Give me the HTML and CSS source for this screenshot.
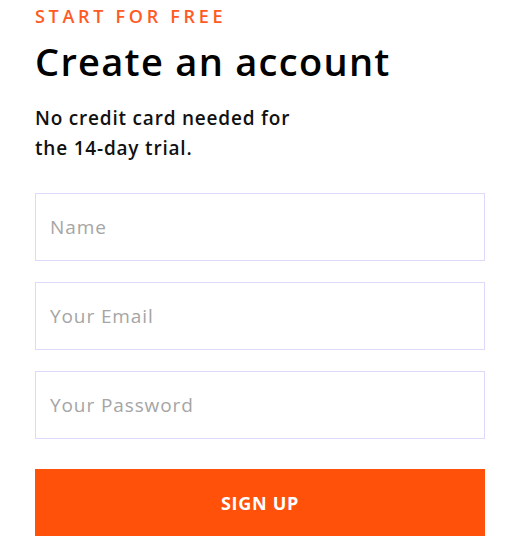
FILE: index.html
```html
<!DOCTYPE html>
<html>
<head>
<meta charset="utf-8">
<link rel="stylesheet" href="styles.css">
</head>
<body>
<div class="signup">
  <p class="eyebrow">START FOR FREE</p>
  <h1 class="title">Create an account</h1>
  <p class="lead">No credit card needed for<br>the 14-day trial.</p>
  <form class="form">
    <input class="field" type="text" placeholder="Name">
    <input class="field" type="email" placeholder="Your Email">
    <input class="field" type="password" placeholder="Your Password">
    <button class="submit" type="button">SIGN UP</button>
  </form>
</div>
</body>
</html>
```
FILE: styles.css
```css
html, body {
  margin: 0;
  padding: 0;
  background: #ffffff;
}
body {
  font-family: "Open Sans", "DejaVu Sans", sans-serif;
  color: #0b0b0b;
}
.signup {
  width: 450px;
  padding: 4px 0 0 35px;
}
.eyebrow {
  margin: 0;
  font-size: 18px;
  line-height: 24px;
  font-weight: 600;
  letter-spacing: 3.7px;
  color: #ff5a1f;
}
.title {
  margin: 11px 0 0 0;
  font-size: 38px;
  line-height: 44px;
  font-weight: 600;
  letter-spacing: 1.3px;
  color: #000;
}
.lead {
  margin: 20px 0 0 0;
  font-size: 19px;
  line-height: 30px;
  font-weight: 600;
  letter-spacing: 0.8px;
  color: #111;
}
.form {
  display: flex;
  flex-direction: column;
  gap: 21px;
  margin-top: 30px;
}
.field {
  box-sizing: border-box;
  width: 450px;
  height: 68px;
  border: 1px solid #dcd9fb;
  padding: 0 14px;
  font-family: inherit;
  font-size: 19px;
  letter-spacing: 0.9px;
  color: #333;
  outline: none;
  background: #fff;
}
.field::placeholder {
  color: #a5a5a5;
}
.submit {
  margin-top: 9px;
  width: 450px;
  height: 67px;
  border: none;
  background: #ff5109;
  color: #fff;
  font-family: inherit;
  font-size: 18px;
  font-weight: 700;
  letter-spacing: 0.7px;
  cursor: pointer;
}
```
